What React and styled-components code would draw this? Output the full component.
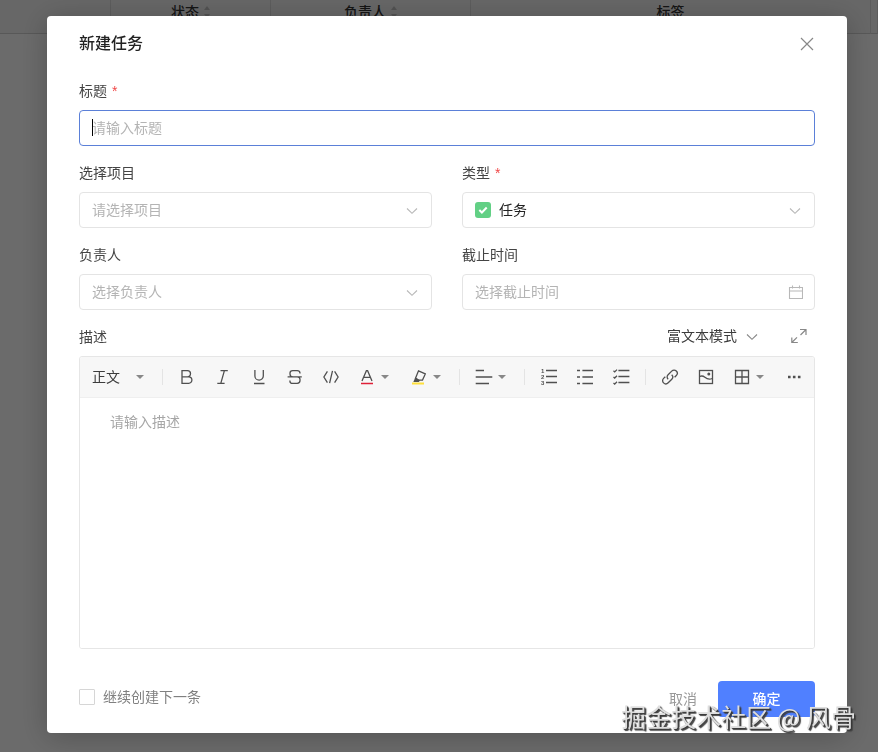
import React from 'react'
import styled, { createGlobalStyle } from 'styled-components'

const GlobalStyle = createGlobalStyle`
  * {
    box-sizing: border-box;
  }
  body {
    margin: 0;
    background: #fff;
  }
  body, button, input, select, textarea {
    font-family: "Liberation Sans", "Noto Sans CJK SC", sans-serif;
    font-size: 14px;
    line-height: 22px;
  }
`

const TaskTable = styled.table`
  width: 100%;
  table-layout: fixed;
  border-collapse: separate;
  border-spacing: 0;
  color: #333;
`

const HeadCell = styled.th`
  width: ${props => props.$width || 'auto'};
  height: 34px;
  padding: 0;
  line-height: 24px;
  font-weight: 500;
  vertical-align: top;
  background: #f5f5f5;
  border-right: 1px solid #dcdcdc;
  border-bottom: 1px solid #d2d2d2;

  svg {
    margin-left: 5px;
    vertical-align: -1px;
  }
`

const Mask = styled.div`
  position: fixed;
  inset: 0;
  padding: 16px 31px 16px 47px;
  overflow: auto;
  background: rgba(0, 0, 0, .58);
`

const Modal = styled.form`
  max-width: 800px;
  margin: 0 auto;
  padding: 0 32px 16px;
  background: #fff;
  border-radius: 4px;
  box-shadow: 0 4px 30px rgba(0, 0, 0, .24);
`

const ModalHeader = styled.header`
  display: flex;
  justify-content: space-between;
  align-items: center;
  height: 56px;
  margin-bottom: 8px;
`

const Title = styled.h2`
  margin: 0;
  font-size: 16px;
  line-height: 26px;
  font-weight: 500;
  color: #222;
`

const IconButton = styled.button`
  display: flex;
  justify-content: center;
  align-items: center;
  width: 16px;
  height: 16px;
  padding: 0;
  border: none;
  background: none;
  color: #888;
  cursor: pointer;
`

const Fields = styled.div`
  display: grid;
  grid-template-columns: 1fr 1fr;
  gap: 16px 30px;
`

const Field = styled.div`
  display: grid;
  gap: 8px;
  min-width: 0;
  grid-column: ${props => (props.$full ? '1 / -1' : 'auto')};
`

const Label = styled.label`
  color: #444;
`

const Required = styled.span`
  margin-left: 5px;
  color: #f04646;
`

const Control = styled.div`
  position: relative;
  display: flex;
`

const Input = styled.input`
  width: 100%;
  height: 36px;
  padding: 0 12px;
  border: 1px solid ${props => (props.$active ? '#5b80d8' : '#e4e4e4')};
  border-radius: 4px;
  outline: none;
  background: #fff;
  color: #222;
  caret-color: ${props => (props.$active ? 'transparent' : 'auto')};

  &::placeholder {
    color: #b4b4b4;
    opacity: 1;
  }
`

const Caret = styled.span`
  position: absolute;
  left: 13px;
  top: 9px;
  width: 1px;
  height: 17px;
  background: #000;
`

const Select = styled.select`
  appearance: none;
  width: 100%;
  height: 36px;
  padding: 0 36px 0 ${props => (props.$icon ? '36px' : '12px')};
  border: 1px solid #e4e4e4;
  border-radius: 4px;
  background: #fff;
  color: ${props => (props.$empty ? '#b4b4b4' : '#222')};
`

const Adornment = styled.span`
  position: absolute;
  top: 0;
  bottom: 0;
  ${props => (props.$left ? 'left: 13px;' : 'right: 12px;')}
  display: flex;
  align-items: center;
  color: #b8b8b8;
  pointer-events: none;
`

const EditorHead = styled.div`
  display: flex;
  justify-content: space-between;
  align-items: center;
  height: 22px;
`

const EditorActions = styled.div`
  display: flex;
  align-items: center;
  gap: 31px;
  padding: 0 8px 2px 0;
`

const InlineSelect = styled.div`
  display: flex;
  align-items: center;
  gap: ${props => props.$gap};
  color: #888;

  select {
    appearance: none;
    padding: 0;
    border: none;
    background: none;
    color: #3c3c3c;
  }
`

const Editor = styled.div`
  border: 1px solid #e6e6e6;
  border-radius: 3px;
  overflow: hidden;
`

const Toolbar = styled.div`
  display: flex;
  flex-wrap: wrap;
  align-items: center;
  min-height: 41px;
  padding-left: 12px;
  background: #f7f7f7;
  border-bottom: 1px solid #efefef;
`

const TextStyle = styled(InlineSelect)`
  padding-right: 12px;
`

const ToolButton = styled.button`
  display: flex;
  align-items: center;
  gap: 5px;
  height: 36px;
  padding: 0 ${props => (props.$menu ? '12px' : '9px')} 0 9px;
  border: none;
  background: none;
  color: #505050;
  cursor: pointer;
`

const Divider = styled.span`
  width: 1px;
  height: 16px;
  margin: 0 6px;
  background: #e4e4e4;
`

const Content = styled.textarea`
  display: block;
  width: 100%;
  height: 250px;
  padding: 13px 30px;
  border: none;
  outline: none;
  resize: none;
  color: #333;

  &::placeholder {
    color: #a6a6a6;
    opacity: 1;
  }
`

const Footer = styled.footer`
  display: flex;
  justify-content: space-between;
  align-items: flex-start;
  margin-top: 32px;
`

const CheckLabel = styled.label`
  display: flex;
  align-items: center;
  gap: 8px;
  line-height: 32px;
  color: #808080;
`

const Checkbox = styled.input`
  appearance: none;
  width: 16px;
  height: 16px;
  margin: 0;
  border: 1px solid #d6d6d6;
  border-radius: 1px;
  background: #fff;

  &:checked {
    border-color: #5080ff;
    background: #5080ff;
  }
`

const Buttons = styled.div`
  display: flex;
  gap: 21px;
`

const Button = styled.button`
  height: 36px;
  min-width: ${props => (props.$primary ? '97px' : '0')};
  padding: 0;
  border: none;
  border-radius: 4px;
  background: ${props => (props.$primary ? '#5080ff' : 'none')};
  color: ${props => (props.$primary ? '#fff' : '#999')};
  font-weight: ${props => (props.$primary ? 500 : 400)};
  cursor: pointer;
`

const Watermark = styled.div`
  position: fixed;
  right: 22px;
  bottom: 20px;
  font-family: "Noto Sans CJK SC", sans-serif;
  font-size: 25px;
  line-height: 32px;
  white-space: nowrap;
  color: #dedede;
  text-shadow: 1px 1px 1px #333, 2px 2px 1px #444;
  pointer-events: none;
`

function Icon({ size = 18, children, ...rest }) {
  return (
    <svg width={size} height={size} viewBox={`0 0 ${size} ${size}`} fill='none' stroke='currentColor' strokeWidth='1.3' aria-hidden='true' {...rest}>
      {children}
    </svg>
  )
}

const ChevronIcon = () => (
  <Icon size={16} strokeWidth='1.1'><path d='M3 6.5l5 4.8 5-4.8' /></Icon>
)

const ArrowIcon = () => (
  <svg width='8' height='4' viewBox='0 0 8 4' fill='#888' aria-hidden='true'><path d='M0 0h8L4 4z' /></svg>
)

const SortIcon = () => (
  <svg width='6' height='12' viewBox='0 0 6 12' fill='#c4c4c4' aria-hidden='true'><path d='M3 0l3 4H0zM3 12l3-4H0z' /></svg>
)

const icons = {
  bold: <path d='M4 2.7h5.4a3.1 3.1 0 0 1 0 6.2H4zM4 8.9h6.7a3.2 3.2 0 0 1 0 6.4H4z' />,
  italic: <path d='M6.5 2.6h7.3M3.3 15.4h7.3M10.4 2.6l-3.6 12.8' />,
  underline: <path d='M4.9 2v5.9a4.2 4.2 0 0 0 8.4 0V2M4 15.5h10.5' />,
  strike: <path d='M14 5.4V5c0-1.5-1.2-2.4-2.7-2.4H6.7C5.1 2.6 4 3.6 4 5.1v.8c0 1.7 1.1 2.9 2.9 2.9h4.3c1.7 0 2.8 1.1 2.8 2.8v1c0 1.7-1.1 2.8-2.8 2.8H6.6c-1.6 0-2.7-1-2.7-2.5v-.5M1.6 8.9h14.2' />,
  code: <path d='M5.4 3.3L1.9 9l3.5 5.7M12.6 3.3L16.1 9l-3.5 5.7M10.5 2.8L7.6 15.2' />,
  color: (
    <>
      <path d='M4 13L8.4 2.7h1.2L14 13M5.7 9.3h6.6' />
      <path d='M3 15.5h12' stroke='#e02038' strokeWidth='1.5' />
    </>
  ),
  highlight: (
    <>
      <path d='M8.5 2.8l6.8 3.1-2.8 6.2-3.6.1-3.4-2z' />
      <path d='M5.4 9.2l4.600 3.200-1.200 1.600H3.300z' fill='currentColor' stroke='none' />
      <path d='M2 15.500h12' stroke='#ffe03c' strokeWidth='2' />
    </>
  ),
  align: <path d='M.7 2.5H9M.7 9h16.6M.7 15.5H14' />,
  ordered: (
    <>
      <path d='M6 2.5h11M6 8.500h11M6 14.500h11' />
      <g fill='currentColor' stroke='none' fontSize='6' fontWeight='bold' fontFamily='Liberation Sans, sans-serif'>
        <text x='1' y='5'>1</text>
        <text x='1' y='11'>2</text>
        <text x='1' y='17'>3</text>
      </g>
    </>
  ),
  bullet: <path d='M6.4 2.5H17M6.4 9H17M6.4 15.5H17M1 2.5h3M1 9h3M1 15.5h3' />,
  task: <path d='M6.4 2.5h11M6.4 8.500h11M6.4 14.500h11M1.5 2.8l1.2 1.1L5 1.6M1.5 8.900l1.2 1.1L5 7.700M1.5 15l1.2 1.1L5 13.800' />,
  link: <path d='M7.2 11.2c-1.4-1.4-1.4-3.2-.1-4.5l3.6-3.6c1.4-1.4 3.3-1.4 4.6-.1s1.3 3.2 0 4.5L13.6 9.2M10.7 6.7c1.4 1.4 1.4 3.2.1 4.5l-3.6 3.6c-1.4 1.4-3.3 1.4-4.6.1s-1.3-3.2 0-4.5l1.7-1.700' />,
  image: (
    <>
      <rect x='2.5' y='2.5' width='13' height='13' />
      <path d='M2.7 8.5c2-1 3.5-.6 5.2.8 2 1.7 4.4 2.5 7.4 1.2' />
      <circle cx='11.8' cy='6.1' r='1.5' fill='currentColor' stroke='none' />
    </>
  ),
  table: <path d='M2.5 2.5h13v13h-13zM9 2.500v13M2.500 9h13' />,
  more: <path d='M3 9h2.600M7.900 9h2.600M12.900 9h2.600' strokeWidth='2.600' />
}

const toolGroups = [
  [
    { icon: 'bold', label: '粗体' },
    { icon: 'italic', label: '斜体' },
    { icon: 'underline', label: '下划线' },
    { icon: 'strike', label: '删除线' },
    { icon: 'code', label: '代码' },
    { icon: 'color', label: '文字颜色', menu: true },
    { icon: 'highlight', label: '背景颜色', menu: true }
  ],
  [{ icon: 'align', label: '对齐', menu: true }],
  [
    { icon: 'ordered', label: '有序列表' },
    { icon: 'bullet', label: '无序列表' },
    { icon: 'task', label: '任务列表' }
  ],
  [
    { icon: 'link', label: '链接' },
    { icon: 'image', label: '图片' },
    { icon: 'table', label: '表格', menu: true },
    { icon: 'more', label: '更多' }
  ]
]

function TableHead() {
  return (
    <TaskTable>
      <thead>
        <tr>
          <HeadCell $width='111px' />
          <HeadCell $width='160px'>状态<SortIcon /></HeadCell>
          <HeadCell $width='200px'>负责人<SortIcon /></HeadCell>
          <HeadCell>标签</HeadCell>
          <HeadCell $width='7px' />
        </tr>
      </thead>
    </TaskTable>
  )
}

function EditorToolbar() {
  return (
    <Toolbar role='toolbar'>
      <TextStyle $gap='16px'>
        <select aria-label='段落样式'>
          <option>正文</option>
        </select>
        <ArrowIcon />
      </TextStyle>
      {toolGroups.map((group, i) => (
        <React.Fragment key={i}>
          <Divider />
          {group.map(tool => (
            <ToolButton key={tool.icon} type='button' aria-label={tool.label} $menu={tool.menu}>
              <Icon>{icons[tool.icon]}</Icon>
              {tool.menu && <ArrowIcon />}
            </ToolButton>
          ))}
        </React.Fragment>
      ))}
    </Toolbar>
  )
}

function App() {
  return (
    <>
      <GlobalStyle />
      <TableHead />
      <Mask>
        <Modal role='dialog' aria-labelledby='dialog-title' onSubmit={e => e.preventDefault()}>
          <ModalHeader>
            <Title id='dialog-title'>新建任务</Title>
            <IconButton type='button' aria-label='关闭'>
              <Icon size={16} strokeWidth='1.2'><path d='M2 2l12 12M14 2L2 14' /></Icon>
            </IconButton>
          </ModalHeader>

          <Fields>
            <Field $full>
              <Label htmlFor='title'>标题<Required>*</Required></Label>
              <Control>
                <Input id='title' placeholder='请输入标题' $active />
                <Caret />
              </Control>
            </Field>

            <Field>
              <Label htmlFor='project'>选择项目</Label>
              <Control>
                <Select id='project' $empty>
                  <option>请选择项目</option>
                </Select>
                <Adornment><ChevronIcon /></Adornment>
              </Control>
            </Field>

            <Field>
              <Label htmlFor='type'>类型<Required>*</Required></Label>
              <Control>
                <Select id='type' $icon>
                  <option>任务</option>
                </Select>
                <Adornment $left>
                  <Icon size={16}>
                    <rect width='16' height='16' rx='3' fill='#62d085' stroke='none' />
                    <path d='M4.3 8l2.6 2.500 4.800-5' stroke='#fff' strokeWidth='2' />
                  </Icon>
                </Adornment>
                <Adornment><ChevronIcon /></Adornment>
              </Control>
            </Field>

            <Field>
              <Label htmlFor='owner'>负责人</Label>
              <Control>
                <Select id='owner' $empty>
                  <option>选择负责人</option>
                </Select>
                <Adornment><ChevronIcon /></Adornment>
              </Control>
            </Field>

            <Field>
              <Label htmlFor='deadline'>截止时间</Label>
              <Control>
                <Input id='deadline' placeholder='选择截止时间' />
                <Adornment>
                  <Icon size={16} strokeWidth='1.1'>
                    <path d='M2.5 3.5h13v11h-13zM2.5 7h13M5.5 1.5v3M12.5 1.5v3' />
                  </Icon>
                </Adornment>
              </Control>
            </Field>

            <Field $full>
              <EditorHead>
                <Label htmlFor='description'>描述</Label>
                <EditorActions>
                  <InlineSelect $gap='7px'>
                    <select aria-label='编辑模式'>
                      <option>富文本模式</option>
                    </select>
                    <ChevronIcon />
                  </InlineSelect>
                  <IconButton type='button' aria-label='全屏'>
                    <Icon size={16} strokeWidth='1.2'>
                      <path d='M9 1.5h6v5.500M15 1.500L9.500 7M.8 9.500v5h6M.8 14.500L6 9.300' />
                    </Icon>
                  </IconButton>
                </EditorActions>
              </EditorHead>
              <Editor>
                <EditorToolbar />
                <Content id='description' placeholder='请输入描述' />
              </Editor>
            </Field>
          </Fields>

          <Footer>
            <CheckLabel>
              <Checkbox type='checkbox' />
              继续创建下一条
            </CheckLabel>
            <Buttons>
              <Button type='button'>取消</Button>
              <Button type='submit' $primary>确定</Button>
            </Buttons>
          </Footer>
        </Modal>
      </Mask>
      <Watermark>掘金技术社区 @ 风骨</Watermark>
    </>
  )
}

export default App
